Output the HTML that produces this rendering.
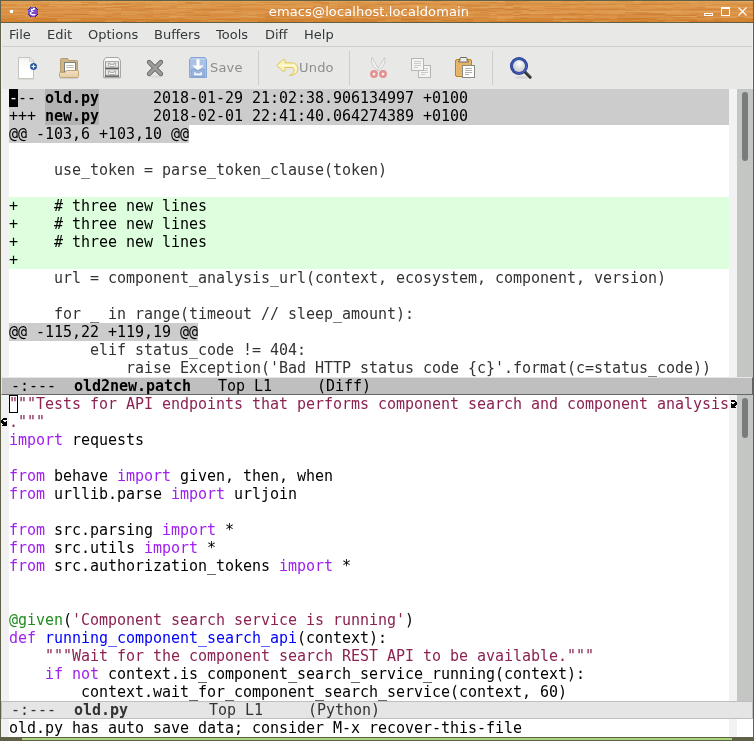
<!DOCTYPE html>
<html lang="en"><head><meta charset="utf-8"><title>emacs@localhost.localdomain</title>
<style>
html,body{margin:0;padding:0}
body{width:754px;height:741px;overflow:hidden;background:#5f6047;position:relative;font-family:"DejaVu Sans","Liberation Sans",sans-serif}
.abs{position:absolute}
#root{position:absolute;left:0;top:0;width:754px;height:741px;will-change:transform}
#title{position:absolute;left:1px;top:1px;width:752px;height:21px;overflow:hidden;background:#d99145}
.wood{position:absolute;left:0;top:0}
#ttext{position:absolute;left:-8px;top:0;width:752px;height:21px;line-height:21px;text-align:center;color:#fff;font-size:13px;letter-spacing:0.12px}
#menubar{position:absolute;left:1px;top:23px;width:752px;height:23px;background:#e8e8e7;border-bottom:1px solid #d0d0ce;font-size:13px;color:#33393b}
#menubar span{position:absolute;top:1px;line-height:22px}
#toolbar{position:absolute;left:1px;top:47px;width:752px;height:42px;background:#e8e8e7}
.sep{position:absolute;top:4px;width:1px;height:34px;background:#cdcdcb}
.tlabel{position:absolute;font-size:13px;letter-spacing:0.2px;color:#8b8e8c;line-height:16px}
#ed{position:absolute;left:1px;top:89px;width:752px;height:648px;background:#fff}
.fringe{position:absolute;top:89px;width:8px;height:648px;background:#f2f2f2}
.sb{position:absolute;left:737px;width:16px;background:#c4c6c4}
.thumb{position:absolute;left:5px;width:6px;border-radius:3px;background:#787c7c}
.row{position:absolute;left:9px;width:720px;height:18px;line-height:18px;white-space:pre;font-family:"DejaVu Sans Mono","Liberation Mono",monospace;font-size:15px;letter-spacing:-0.0308px;color:#000;overflow:visible}
.rh{background:#ccc}
.ra{background:#dfd}
.h{}
.fh{background:#b3b3b3;font-weight:bold}
.hh{background:#ccc;display:inline-block;height:18px}
.c{color:#333}
.s{color:#8b2252}
.k{color:#a020f0}
.f{color:#00f}
.t{color:#228b22}
.ml{position:absolute;left:1px;width:750px;height:16px;line-height:16px;white-space:pre;font-family:"DejaVu Sans Mono","Liberation Mono",monospace;font-size:15px;letter-spacing:-0.0308px;padding-left:0}
.ml1{background:#bfbfbf;color:#000;border:1px solid;border-color:#e6e6e6 #666 #666 #e6e6e6}
.ml2{background:#e5e5e5;color:#333;border:1px solid #bfbfbf}
.ml b{font-weight:bold}
.cur{position:absolute;left:9px;top:89px;width:9px;height:18px;background:#000}
.cur2{position:absolute;left:9px;top:395px;width:7px;height:16px;border:1px solid #000}
</style></head><body><div id="root">
<div id="title"><svg class="wood" width="752" height="21" viewBox="0 0 752 21" shape-rendering="crispEdges"><rect x="0" y="0" width="752" height="1" fill="#e0a055"/><rect x="0" y="1" width="752" height="1" fill="#dc9a4e"/><rect x="0" y="2" width="752" height="1" fill="#db9548"/><rect x="0" y="3" width="752" height="1" fill="#d99145"/><rect x="0" y="4" width="752" height="1" fill="#dc9648"/><rect x="0" y="5" width="752" height="1" fill="#de9a4e"/><rect x="0" y="6" width="752" height="1" fill="#dd964a"/><rect x="0" y="7" width="752" height="1" fill="#d98f42"/><rect x="0" y="8" width="752" height="1" fill="#d68a3e"/><rect x="0" y="9" width="752" height="1" fill="#d98f44"/><rect x="0" y="10" width="752" height="1" fill="#dc954a"/><rect x="0" y="11" width="752" height="1" fill="#dd984c"/><rect x="0" y="12" width="752" height="1" fill="#da9246"/><rect x="0" y="13" width="752" height="1" fill="#d68b3f"/><rect x="0" y="14" width="752" height="1" fill="#d88e42"/><rect x="0" y="15" width="752" height="1" fill="#db9448"/><rect x="0" y="16" width="752" height="1" fill="#d98f43"/><rect x="0" y="17" width="752" height="1" fill="#d58839"/><rect x="0" y="18" width="752" height="1" fill="#d3842f"/><rect x="0" y="19" width="752" height="1" fill="#d58736"/><rect x="0" y="20" width="752" height="1" fill="#d1802c"/><rect x="32" y="0" width="8" height="1" fill="#b8651a" opacity="0.12"/><rect x="40" y="0" width="16" height="1" fill="#f0be7c" opacity="0.14"/><rect x="56" y="0" width="16" height="1" fill="#b8651a" opacity="0.12"/><rect x="128" y="0" width="16" height="1" fill="#f0be7c" opacity="0.14"/><rect x="152" y="0" width="8" height="1" fill="#b8651a" opacity="0.12"/><rect x="160" y="0" width="16" height="1" fill="#f0be7c" opacity="0.2"/><rect x="192" y="0" width="8" height="1" fill="#f0be7c" opacity="0.3"/><rect x="200" y="0" width="24" height="1" fill="#f0be7c" opacity="0.14"/><rect x="240" y="0" width="16" height="1" fill="#f0be7c" opacity="0.14"/><rect x="304" y="0" width="16" height="1" fill="#b8651a" opacity="0.12"/><rect x="328" y="0" width="8" height="1" fill="#f0be7c" opacity="0.2"/><rect x="368" y="0" width="8" height="1" fill="#f0be7c" opacity="0.2"/><rect x="392" y="0" width="16" height="1" fill="#f0be7c" opacity="0.3"/><rect x="432" y="0" width="8" height="1" fill="#b8651a" opacity="0.2"/><rect x="456" y="0" width="16" height="1" fill="#f0be7c" opacity="0.14"/><rect x="480" y="0" width="24" height="1" fill="#f0be7c" opacity="0.3"/><rect x="504" y="0" width="24" height="1" fill="#b8651a" opacity="0.28"/><rect x="560" y="0" width="24" height="1" fill="#b8651a" opacity="0.2"/><rect x="584" y="0" width="8" height="1" fill="#f0be7c" opacity="0.14"/><rect x="592" y="0" width="16" height="1" fill="#f0be7c" opacity="0.2"/><rect x="616" y="0" width="16" height="1" fill="#b8651a" opacity="0.2"/><rect x="632" y="0" width="8" height="1" fill="#f0be7c" opacity="0.2"/><rect x="640" y="0" width="16" height="1" fill="#b8651a" opacity="0.12"/><rect x="704" y="0" width="8" height="1" fill="#f0be7c" opacity="0.14"/><rect x="728" y="0" width="16" height="1" fill="#f0be7c" opacity="0.2"/><rect x="744" y="0" width="8" height="1" fill="#f0be7c" opacity="0.3"/><rect x="56" y="1" width="24" height="1" fill="#f0be7c" opacity="0.3"/><rect x="80" y="1" width="16" height="1" fill="#b8651a" opacity="0.2"/><rect x="96" y="1" width="16" height="1" fill="#f0be7c" opacity="0.3"/><rect x="112" y="1" width="16" height="1" fill="#f0be7c" opacity="0.14"/><rect x="136" y="1" width="8" height="1" fill="#b8651a" opacity="0.12"/><rect x="144" y="1" width="8" height="1" fill="#f0be7c" opacity="0.14"/><rect x="152" y="1" width="16" height="1" fill="#f0be7c" opacity="0.2"/><rect x="168" y="1" width="16" height="1" fill="#f0be7c" opacity="0.14"/><rect x="184" y="1" width="16" height="1" fill="#b8651a" opacity="0.28"/><rect x="208" y="1" width="16" height="1" fill="#b8651a" opacity="0.12"/><rect x="248" y="1" width="8" height="1" fill="#f0be7c" opacity="0.14"/><rect x="256" y="1" width="24" height="1" fill="#b8651a" opacity="0.2"/><rect x="312" y="1" width="16" height="1" fill="#b8651a" opacity="0.28"/><rect x="344" y="1" width="16" height="1" fill="#b8651a" opacity="0.28"/><rect x="376" y="1" width="8" height="1" fill="#b8651a" opacity="0.12"/><rect x="400" y="1" width="16" height="1" fill="#b8651a" opacity="0.12"/><rect x="456" y="1" width="8" height="1" fill="#f0be7c" opacity="0.2"/><rect x="480" y="1" width="16" height="1" fill="#b8651a" opacity="0.28"/><rect x="552" y="1" width="8" height="1" fill="#f0be7c" opacity="0.14"/><rect x="568" y="1" width="8" height="1" fill="#f0be7c" opacity="0.3"/><rect x="688" y="1" width="8" height="1" fill="#f0be7c" opacity="0.3"/><rect x="736" y="1" width="24" height="1" fill="#f0be7c" opacity="0.14"/><rect x="0" y="2" width="8" height="1" fill="#f0be7c" opacity="0.2"/><rect x="8" y="2" width="24" height="1" fill="#f0be7c" opacity="0.3"/><rect x="48" y="2" width="8" height="1" fill="#f0be7c" opacity="0.3"/><rect x="56" y="2" width="8" height="1" fill="#f0be7c" opacity="0.3"/><rect x="64" y="2" width="24" height="1" fill="#f0be7c" opacity="0.3"/><rect x="88" y="2" width="8" height="1" fill="#b8651a" opacity="0.12"/><rect x="96" y="2" width="8" height="1" fill="#f0be7c" opacity="0.14"/><rect x="112" y="2" width="16" height="1" fill="#b8651a" opacity="0.28"/><rect x="184" y="2" width="16" height="1" fill="#b8651a" opacity="0.28"/><rect x="240" y="2" width="16" height="1" fill="#f0be7c" opacity="0.14"/><rect x="256" y="2" width="8" height="1" fill="#f0be7c" opacity="0.3"/><rect x="264" y="2" width="24" height="1" fill="#f0be7c" opacity="0.14"/><rect x="320" y="2" width="8" height="1" fill="#b8651a" opacity="0.2"/><rect x="400" y="2" width="24" height="1" fill="#b8651a" opacity="0.28"/><rect x="496" y="2" width="8" height="1" fill="#b8651a" opacity="0.2"/><rect x="504" y="2" width="16" height="1" fill="#b8651a" opacity="0.28"/><rect x="520" y="2" width="8" height="1" fill="#b8651a" opacity="0.12"/><rect x="528" y="2" width="24" height="1" fill="#b8651a" opacity="0.12"/><rect x="584" y="2" width="8" height="1" fill="#b8651a" opacity="0.12"/><rect x="592" y="2" width="16" height="1" fill="#f0be7c" opacity="0.14"/><rect x="632" y="2" width="8" height="1" fill="#f0be7c" opacity="0.2"/><rect x="640" y="2" width="16" height="1" fill="#b8651a" opacity="0.2"/><rect x="656" y="2" width="8" height="1" fill="#b8651a" opacity="0.12"/><rect x="664" y="2" width="24" height="1" fill="#b8651a" opacity="0.2"/><rect x="704" y="2" width="24" height="1" fill="#f0be7c" opacity="0.2"/><rect x="16" y="3" width="8" height="1" fill="#f0be7c" opacity="0.2"/><rect x="32" y="3" width="8" height="1" fill="#b8651a" opacity="0.12"/><rect x="80" y="3" width="8" height="1" fill="#b8651a" opacity="0.28"/><rect x="104" y="3" width="24" height="1" fill="#b8651a" opacity="0.2"/><rect x="136" y="3" width="8" height="1" fill="#b8651a" opacity="0.12"/><rect x="152" y="3" width="24" height="1" fill="#f0be7c" opacity="0.2"/><rect x="184" y="3" width="8" height="1" fill="#f0be7c" opacity="0.14"/><rect x="192" y="3" width="16" height="1" fill="#f0be7c" opacity="0.3"/><rect x="248" y="3" width="8" height="1" fill="#b8651a" opacity="0.12"/><rect x="264" y="3" width="24" height="1" fill="#b8651a" opacity="0.12"/><rect x="296" y="3" width="24" height="1" fill="#f0be7c" opacity="0.2"/><rect x="328" y="3" width="8" height="1" fill="#f0be7c" opacity="0.3"/><rect x="376" y="3" width="24" height="1" fill="#b8651a" opacity="0.2"/><rect x="440" y="3" width="8" height="1" fill="#b8651a" opacity="0.28"/><rect x="496" y="3" width="8" height="1" fill="#f0be7c" opacity="0.3"/><rect x="504" y="3" width="8" height="1" fill="#b8651a" opacity="0.12"/><rect x="560" y="3" width="16" height="1" fill="#b8651a" opacity="0.2"/><rect x="584" y="3" width="8" height="1" fill="#b8651a" opacity="0.12"/><rect x="592" y="3" width="8" height="1" fill="#b8651a" opacity="0.2"/><rect x="600" y="3" width="16" height="1" fill="#b8651a" opacity="0.12"/><rect x="616" y="3" width="8" height="1" fill="#f0be7c" opacity="0.14"/><rect x="624" y="3" width="8" height="1" fill="#b8651a" opacity="0.12"/><rect x="632" y="3" width="16" height="1" fill="#b8651a" opacity="0.28"/><rect x="648" y="3" width="8" height="1" fill="#b8651a" opacity="0.12"/><rect x="656" y="3" width="8" height="1" fill="#b8651a" opacity="0.12"/><rect x="664" y="3" width="8" height="1" fill="#b8651a" opacity="0.12"/><rect x="672" y="3" width="16" height="1" fill="#f0be7c" opacity="0.2"/><rect x="688" y="3" width="24" height="1" fill="#f0be7c" opacity="0.3"/><rect x="0" y="4" width="16" height="1" fill="#b8651a" opacity="0.2"/><rect x="40" y="4" width="8" height="1" fill="#b8651a" opacity="0.28"/><rect x="48" y="4" width="24" height="1" fill="#f0be7c" opacity="0.3"/><rect x="112" y="4" width="16" height="1" fill="#f0be7c" opacity="0.3"/><rect x="216" y="4" width="8" height="1" fill="#f0be7c" opacity="0.14"/><rect x="224" y="4" width="24" height="1" fill="#b8651a" opacity="0.12"/><rect x="264" y="4" width="16" height="1" fill="#f0be7c" opacity="0.14"/><rect x="360" y="4" width="16" height="1" fill="#b8651a" opacity="0.12"/><rect x="376" y="4" width="8" height="1" fill="#f0be7c" opacity="0.14"/><rect x="408" y="4" width="16" height="1" fill="#f0be7c" opacity="0.3"/><rect x="448" y="4" width="8" height="1" fill="#f0be7c" opacity="0.14"/><rect x="456" y="4" width="8" height="1" fill="#b8651a" opacity="0.28"/><rect x="464" y="4" width="24" height="1" fill="#b8651a" opacity="0.28"/><rect x="488" y="4" width="8" height="1" fill="#f0be7c" opacity="0.14"/><rect x="496" y="4" width="16" height="1" fill="#b8651a" opacity="0.28"/><rect x="592" y="4" width="16" height="1" fill="#f0be7c" opacity="0.14"/><rect x="608" y="4" width="16" height="1" fill="#f0be7c" opacity="0.2"/><rect x="648" y="4" width="16" height="1" fill="#f0be7c" opacity="0.14"/><rect x="736" y="4" width="16" height="1" fill="#b8651a" opacity="0.12"/><rect x="40" y="5" width="16" height="1" fill="#b8651a" opacity="0.2"/><rect x="64" y="5" width="8" height="1" fill="#b8651a" opacity="0.2"/><rect x="72" y="5" width="16" height="1" fill="#f0be7c" opacity="0.14"/><rect x="88" y="5" width="24" height="1" fill="#f0be7c" opacity="0.3"/><rect x="112" y="5" width="8" height="1" fill="#b8651a" opacity="0.12"/><rect x="120" y="5" width="16" height="1" fill="#b8651a" opacity="0.28"/><rect x="136" y="5" width="8" height="1" fill="#b8651a" opacity="0.2"/><rect x="152" y="5" width="8" height="1" fill="#f0be7c" opacity="0.3"/><rect x="168" y="5" width="8" height="1" fill="#b8651a" opacity="0.2"/><rect x="216" y="5" width="24" height="1" fill="#b8651a" opacity="0.28"/><rect x="240" y="5" width="16" height="1" fill="#f0be7c" opacity="0.14"/><rect x="296" y="5" width="16" height="1" fill="#f0be7c" opacity="0.2"/><rect x="312" y="5" width="16" height="1" fill="#b8651a" opacity="0.2"/><rect x="336" y="5" width="24" height="1" fill="#b8651a" opacity="0.28"/><rect x="360" y="5" width="8" height="1" fill="#b8651a" opacity="0.28"/><rect x="368" y="5" width="24" height="1" fill="#b8651a" opacity="0.12"/><rect x="392" y="5" width="24" height="1" fill="#f0be7c" opacity="0.14"/><rect x="464" y="5" width="16" height="1" fill="#b8651a" opacity="0.28"/><rect x="480" y="5" width="8" height="1" fill="#b8651a" opacity="0.12"/><rect x="496" y="5" width="8" height="1" fill="#f0be7c" opacity="0.2"/><rect x="504" y="5" width="16" height="1" fill="#f0be7c" opacity="0.14"/><rect x="544" y="5" width="16" height="1" fill="#b8651a" opacity="0.28"/><rect x="560" y="5" width="8" height="1" fill="#b8651a" opacity="0.2"/><rect x="616" y="5" width="8" height="1" fill="#f0be7c" opacity="0.14"/><rect x="624" y="5" width="16" height="1" fill="#b8651a" opacity="0.2"/><rect x="656" y="5" width="8" height="1" fill="#f0be7c" opacity="0.2"/><rect x="704" y="5" width="16" height="1" fill="#f0be7c" opacity="0.2"/><rect x="736" y="5" width="16" height="1" fill="#b8651a" opacity="0.12"/><rect x="0" y="6" width="8" height="1" fill="#f0be7c" opacity="0.3"/><rect x="8" y="6" width="24" height="1" fill="#f0be7c" opacity="0.3"/><rect x="56" y="6" width="16" height="1" fill="#f0be7c" opacity="0.14"/><rect x="104" y="6" width="24" height="1" fill="#b8651a" opacity="0.28"/><rect x="144" y="6" width="8" height="1" fill="#f0be7c" opacity="0.2"/><rect x="168" y="6" width="8" height="1" fill="#b8651a" opacity="0.12"/><rect x="176" y="6" width="16" height="1" fill="#f0be7c" opacity="0.3"/><rect x="280" y="6" width="8" height="1" fill="#f0be7c" opacity="0.2"/><rect x="312" y="6" width="8" height="1" fill="#b8651a" opacity="0.28"/><rect x="344" y="6" width="24" height="1" fill="#b8651a" opacity="0.2"/><rect x="376" y="6" width="8" height="1" fill="#f0be7c" opacity="0.2"/><rect x="408" y="6" width="8" height="1" fill="#f0be7c" opacity="0.14"/><rect x="424" y="6" width="8" height="1" fill="#f0be7c" opacity="0.14"/><rect x="440" y="6" width="8" height="1" fill="#f0be7c" opacity="0.3"/><rect x="472" y="6" width="24" height="1" fill="#f0be7c" opacity="0.3"/><rect x="504" y="6" width="8" height="1" fill="#f0be7c" opacity="0.3"/><rect x="512" y="6" width="8" height="1" fill="#b8651a" opacity="0.28"/><rect x="520" y="6" width="8" height="1" fill="#f0be7c" opacity="0.2"/><rect x="552" y="6" width="24" height="1" fill="#f0be7c" opacity="0.14"/><rect x="576" y="6" width="8" height="1" fill="#b8651a" opacity="0.12"/><rect x="664" y="6" width="8" height="1" fill="#f0be7c" opacity="0.2"/><rect x="672" y="6" width="8" height="1" fill="#b8651a" opacity="0.12"/><rect x="696" y="6" width="8" height="1" fill="#b8651a" opacity="0.2"/><rect x="704" y="6" width="16" height="1" fill="#f0be7c" opacity="0.3"/><rect x="720" y="6" width="16" height="1" fill="#f0be7c" opacity="0.3"/><rect x="736" y="6" width="16" height="1" fill="#f0be7c" opacity="0.2"/><rect x="40" y="7" width="16" height="1" fill="#f0be7c" opacity="0.14"/><rect x="56" y="7" width="16" height="1" fill="#f0be7c" opacity="0.14"/><rect x="72" y="7" width="8" height="1" fill="#f0be7c" opacity="0.14"/><rect x="80" y="7" width="16" height="1" fill="#b8651a" opacity="0.2"/><rect x="104" y="7" width="16" height="1" fill="#f0be7c" opacity="0.3"/><rect x="144" y="7" width="8" height="1" fill="#b8651a" opacity="0.28"/><rect x="192" y="7" width="8" height="1" fill="#f0be7c" opacity="0.14"/><rect x="264" y="7" width="8" height="1" fill="#f0be7c" opacity="0.3"/><rect x="296" y="7" width="16" height="1" fill="#b8651a" opacity="0.28"/><rect x="336" y="7" width="8" height="1" fill="#b8651a" opacity="0.28"/><rect x="352" y="7" width="16" height="1" fill="#b8651a" opacity="0.2"/><rect x="384" y="7" width="8" height="1" fill="#f0be7c" opacity="0.2"/><rect x="416" y="7" width="8" height="1" fill="#f0be7c" opacity="0.2"/><rect x="440" y="7" width="24" height="1" fill="#f0be7c" opacity="0.3"/><rect x="488" y="7" width="8" height="1" fill="#b8651a" opacity="0.28"/><rect x="496" y="7" width="8" height="1" fill="#b8651a" opacity="0.28"/><rect x="504" y="7" width="8" height="1" fill="#f0be7c" opacity="0.14"/><rect x="512" y="7" width="8" height="1" fill="#b8651a" opacity="0.12"/><rect x="528" y="7" width="16" height="1" fill="#f0be7c" opacity="0.14"/><rect x="544" y="7" width="16" height="1" fill="#b8651a" opacity="0.12"/><rect x="624" y="7" width="8" height="1" fill="#f0be7c" opacity="0.2"/><rect x="640" y="7" width="8" height="1" fill="#f0be7c" opacity="0.2"/><rect x="648" y="7" width="8" height="1" fill="#f0be7c" opacity="0.14"/><rect x="672" y="7" width="16" height="1" fill="#f0be7c" opacity="0.14"/><rect x="0" y="8" width="8" height="1" fill="#f0be7c" opacity="0.2"/><rect x="8" y="8" width="8" height="1" fill="#f0be7c" opacity="0.2"/><rect x="80" y="8" width="8" height="1" fill="#f0be7c" opacity="0.2"/><rect x="104" y="8" width="16" height="1" fill="#f0be7c" opacity="0.2"/><rect x="168" y="8" width="24" height="1" fill="#f0be7c" opacity="0.3"/><rect x="192" y="8" width="8" height="1" fill="#b8651a" opacity="0.2"/><rect x="200" y="8" width="24" height="1" fill="#b8651a" opacity="0.12"/><rect x="232" y="8" width="8" height="1" fill="#b8651a" opacity="0.12"/><rect x="288" y="8" width="16" height="1" fill="#f0be7c" opacity="0.14"/><rect x="328" y="8" width="8" height="1" fill="#f0be7c" opacity="0.14"/><rect x="336" y="8" width="16" height="1" fill="#f0be7c" opacity="0.2"/><rect x="368" y="8" width="8" height="1" fill="#f0be7c" opacity="0.2"/><rect x="384" y="8" width="8" height="1" fill="#f0be7c" opacity="0.2"/><rect x="392" y="8" width="8" height="1" fill="#b8651a" opacity="0.12"/><rect x="400" y="8" width="16" height="1" fill="#b8651a" opacity="0.28"/><rect x="416" y="8" width="24" height="1" fill="#b8651a" opacity="0.28"/><rect x="488" y="8" width="16" height="1" fill="#f0be7c" opacity="0.14"/><rect x="504" y="8" width="8" height="1" fill="#b8651a" opacity="0.28"/><rect x="512" y="8" width="8" height="1" fill="#b8651a" opacity="0.12"/><rect x="520" y="8" width="8" height="1" fill="#b8651a" opacity="0.28"/><rect x="528" y="8" width="8" height="1" fill="#f0be7c" opacity="0.3"/><rect x="536" y="8" width="24" height="1" fill="#f0be7c" opacity="0.2"/><rect x="560" y="8" width="8" height="1" fill="#b8651a" opacity="0.2"/><rect x="600" y="8" width="16" height="1" fill="#b8651a" opacity="0.2"/><rect x="632" y="8" width="8" height="1" fill="#f0be7c" opacity="0.3"/><rect x="688" y="8" width="16" height="1" fill="#b8651a" opacity="0.12"/><rect x="704" y="8" width="8" height="1" fill="#b8651a" opacity="0.2"/><rect x="736" y="8" width="8" height="1" fill="#f0be7c" opacity="0.14"/><rect x="8" y="9" width="16" height="1" fill="#f0be7c" opacity="0.3"/><rect x="40" y="9" width="8" height="1" fill="#f0be7c" opacity="0.14"/><rect x="64" y="9" width="8" height="1" fill="#f0be7c" opacity="0.2"/><rect x="136" y="9" width="8" height="1" fill="#b8651a" opacity="0.28"/><rect x="152" y="9" width="16" height="1" fill="#f0be7c" opacity="0.3"/><rect x="168" y="9" width="16" height="1" fill="#f0be7c" opacity="0.2"/><rect x="200" y="9" width="8" height="1" fill="#b8651a" opacity="0.12"/><rect x="208" y="9" width="8" height="1" fill="#b8651a" opacity="0.28"/><rect x="224" y="9" width="16" height="1" fill="#f0be7c" opacity="0.2"/><rect x="296" y="9" width="8" height="1" fill="#b8651a" opacity="0.28"/><rect x="352" y="9" width="8" height="1" fill="#b8651a" opacity="0.2"/><rect x="360" y="9" width="16" height="1" fill="#f0be7c" opacity="0.2"/><rect x="392" y="9" width="8" height="1" fill="#b8651a" opacity="0.28"/><rect x="400" y="9" width="8" height="1" fill="#b8651a" opacity="0.28"/><rect x="432" y="9" width="24" height="1" fill="#f0be7c" opacity="0.14"/><rect x="456" y="9" width="8" height="1" fill="#f0be7c" opacity="0.3"/><rect x="464" y="9" width="24" height="1" fill="#b8651a" opacity="0.28"/><rect x="520" y="9" width="8" height="1" fill="#f0be7c" opacity="0.3"/><rect x="528" y="9" width="8" height="1" fill="#b8651a" opacity="0.28"/><rect x="560" y="9" width="16" height="1" fill="#f0be7c" opacity="0.2"/><rect x="592" y="9" width="8" height="1" fill="#f0be7c" opacity="0.14"/><rect x="600" y="9" width="24" height="1" fill="#f0be7c" opacity="0.14"/><rect x="672" y="9" width="8" height="1" fill="#f0be7c" opacity="0.3"/><rect x="720" y="9" width="8" height="1" fill="#f0be7c" opacity="0.14"/><rect x="728" y="9" width="8" height="1" fill="#f0be7c" opacity="0.14"/><rect x="736" y="9" width="16" height="1" fill="#f0be7c" opacity="0.14"/><rect x="8" y="10" width="8" height="1" fill="#f0be7c" opacity="0.3"/><rect x="40" y="10" width="8" height="1" fill="#b8651a" opacity="0.28"/><rect x="88" y="10" width="16" height="1" fill="#f0be7c" opacity="0.2"/><rect x="104" y="10" width="8" height="1" fill="#b8651a" opacity="0.12"/><rect x="208" y="10" width="16" height="1" fill="#f0be7c" opacity="0.14"/><rect x="224" y="10" width="8" height="1" fill="#f0be7c" opacity="0.14"/><rect x="232" y="10" width="8" height="1" fill="#b8651a" opacity="0.28"/><rect x="280" y="10" width="24" height="1" fill="#b8651a" opacity="0.28"/><rect x="304" y="10" width="8" height="1" fill="#b8651a" opacity="0.12"/><rect x="320" y="10" width="8" height="1" fill="#f0be7c" opacity="0.14"/><rect x="328" y="10" width="24" height="1" fill="#f0be7c" opacity="0.14"/><rect x="488" y="10" width="8" height="1" fill="#b8651a" opacity="0.28"/><rect x="536" y="10" width="8" height="1" fill="#f0be7c" opacity="0.14"/><rect x="544" y="10" width="8" height="1" fill="#f0be7c" opacity="0.14"/><rect x="560" y="10" width="24" height="1" fill="#f0be7c" opacity="0.14"/><rect x="592" y="10" width="24" height="1" fill="#f0be7c" opacity="0.14"/><rect x="616" y="10" width="24" height="1" fill="#f0be7c" opacity="0.3"/><rect x="640" y="10" width="8" height="1" fill="#f0be7c" opacity="0.3"/><rect x="648" y="10" width="24" height="1" fill="#f0be7c" opacity="0.3"/><rect x="672" y="10" width="16" height="1" fill="#f0be7c" opacity="0.14"/><rect x="688" y="10" width="8" height="1" fill="#f0be7c" opacity="0.14"/><rect x="696" y="10" width="24" height="1" fill="#f0be7c" opacity="0.3"/><rect x="720" y="10" width="24" height="1" fill="#b8651a" opacity="0.12"/><rect x="744" y="10" width="8" height="1" fill="#f0be7c" opacity="0.3"/><rect x="0" y="11" width="8" height="1" fill="#b8651a" opacity="0.2"/><rect x="8" y="11" width="16" height="1" fill="#b8651a" opacity="0.2"/><rect x="80" y="11" width="8" height="1" fill="#b8651a" opacity="0.12"/><rect x="120" y="11" width="8" height="1" fill="#f0be7c" opacity="0.14"/><rect x="128" y="11" width="16" height="1" fill="#f0be7c" opacity="0.14"/><rect x="144" y="11" width="8" height="1" fill="#b8651a" opacity="0.12"/><rect x="176" y="11" width="16" height="1" fill="#b8651a" opacity="0.28"/><rect x="200" y="11" width="8" height="1" fill="#b8651a" opacity="0.12"/><rect x="208" y="11" width="24" height="1" fill="#f0be7c" opacity="0.14"/><rect x="280" y="11" width="8" height="1" fill="#f0be7c" opacity="0.2"/><rect x="288" y="11" width="24" height="1" fill="#f0be7c" opacity="0.3"/><rect x="312" y="11" width="8" height="1" fill="#b8651a" opacity="0.2"/><rect x="320" y="11" width="8" height="1" fill="#b8651a" opacity="0.28"/><rect x="328" y="11" width="16" height="1" fill="#f0be7c" opacity="0.3"/><rect x="384" y="11" width="24" height="1" fill="#f0be7c" opacity="0.3"/><rect x="432" y="11" width="24" height="1" fill="#b8651a" opacity="0.2"/><rect x="480" y="11" width="8" height="1" fill="#b8651a" opacity="0.28"/><rect x="488" y="11" width="24" height="1" fill="#f0be7c" opacity="0.14"/><rect x="512" y="11" width="8" height="1" fill="#b8651a" opacity="0.28"/><rect x="520" y="11" width="16" height="1" fill="#f0be7c" opacity="0.14"/><rect x="560" y="11" width="8" height="1" fill="#f0be7c" opacity="0.14"/><rect x="608" y="11" width="8" height="1" fill="#f0be7c" opacity="0.14"/><rect x="624" y="11" width="24" height="1" fill="#b8651a" opacity="0.2"/><rect x="648" y="11" width="8" height="1" fill="#f0be7c" opacity="0.14"/><rect x="656" y="11" width="8" height="1" fill="#f0be7c" opacity="0.2"/><rect x="664" y="11" width="16" height="1" fill="#f0be7c" opacity="0.2"/><rect x="720" y="11" width="8" height="1" fill="#b8651a" opacity="0.28"/><rect x="728" y="11" width="16" height="1" fill="#f0be7c" opacity="0.14"/><rect x="88" y="12" width="24" height="1" fill="#f0be7c" opacity="0.2"/><rect x="112" y="12" width="8" height="1" fill="#b8651a" opacity="0.28"/><rect x="160" y="12" width="8" height="1" fill="#b8651a" opacity="0.2"/><rect x="248" y="12" width="8" height="1" fill="#f0be7c" opacity="0.3"/><rect x="256" y="12" width="8" height="1" fill="#f0be7c" opacity="0.14"/><rect x="264" y="12" width="16" height="1" fill="#b8651a" opacity="0.28"/><rect x="352" y="12" width="16" height="1" fill="#f0be7c" opacity="0.3"/><rect x="368" y="12" width="8" height="1" fill="#b8651a" opacity="0.12"/><rect x="408" y="12" width="8" height="1" fill="#b8651a" opacity="0.2"/><rect x="416" y="12" width="8" height="1" fill="#f0be7c" opacity="0.2"/><rect x="440" y="12" width="24" height="1" fill="#b8651a" opacity="0.2"/><rect x="464" y="12" width="8" height="1" fill="#f0be7c" opacity="0.3"/><rect x="520" y="12" width="8" height="1" fill="#f0be7c" opacity="0.14"/><rect x="528" y="12" width="24" height="1" fill="#f0be7c" opacity="0.3"/><rect x="568" y="12" width="8" height="1" fill="#b8651a" opacity="0.28"/><rect x="600" y="12" width="24" height="1" fill="#f0be7c" opacity="0.2"/><rect x="632" y="12" width="8" height="1" fill="#b8651a" opacity="0.2"/><rect x="640" y="12" width="24" height="1" fill="#b8651a" opacity="0.2"/><rect x="664" y="12" width="24" height="1" fill="#f0be7c" opacity="0.14"/><rect x="712" y="12" width="8" height="1" fill="#b8651a" opacity="0.2"/><rect x="0" y="13" width="8" height="1" fill="#f0be7c" opacity="0.2"/><rect x="8" y="13" width="16" height="1" fill="#f0be7c" opacity="0.3"/><rect x="64" y="13" width="24" height="1" fill="#b8651a" opacity="0.28"/><rect x="96" y="13" width="8" height="1" fill="#f0be7c" opacity="0.2"/><rect x="120" y="13" width="16" height="1" fill="#f0be7c" opacity="0.3"/><rect x="176" y="13" width="8" height="1" fill="#f0be7c" opacity="0.3"/><rect x="240" y="13" width="16" height="1" fill="#f0be7c" opacity="0.2"/><rect x="320" y="13" width="24" height="1" fill="#f0be7c" opacity="0.2"/><rect x="376" y="13" width="16" height="1" fill="#b8651a" opacity="0.2"/><rect x="392" y="13" width="24" height="1" fill="#f0be7c" opacity="0.3"/><rect x="424" y="13" width="8" height="1" fill="#f0be7c" opacity="0.14"/><rect x="488" y="13" width="8" height="1" fill="#f0be7c" opacity="0.3"/><rect x="512" y="13" width="8" height="1" fill="#f0be7c" opacity="0.3"/><rect x="520" y="13" width="8" height="1" fill="#b8651a" opacity="0.28"/><rect x="544" y="13" width="8" height="1" fill="#b8651a" opacity="0.2"/><rect x="552" y="13" width="16" height="1" fill="#b8651a" opacity="0.12"/><rect x="568" y="13" width="8" height="1" fill="#b8651a" opacity="0.2"/><rect x="576" y="13" width="16" height="1" fill="#b8651a" opacity="0.2"/><rect x="592" y="13" width="16" height="1" fill="#b8651a" opacity="0.12"/><rect x="632" y="13" width="8" height="1" fill="#b8651a" opacity="0.2"/><rect x="640" y="13" width="24" height="1" fill="#b8651a" opacity="0.28"/><rect x="664" y="13" width="24" height="1" fill="#f0be7c" opacity="0.14"/><rect x="720" y="13" width="8" height="1" fill="#b8651a" opacity="0.12"/><rect x="728" y="13" width="8" height="1" fill="#f0be7c" opacity="0.2"/><rect x="24" y="14" width="16" height="1" fill="#f0be7c" opacity="0.3"/><rect x="64" y="14" width="24" height="1" fill="#f0be7c" opacity="0.14"/><rect x="144" y="14" width="8" height="1" fill="#b8651a" opacity="0.12"/><rect x="152" y="14" width="24" height="1" fill="#f0be7c" opacity="0.14"/><rect x="192" y="14" width="8" height="1" fill="#b8651a" opacity="0.2"/><rect x="200" y="14" width="8" height="1" fill="#b8651a" opacity="0.28"/><rect x="232" y="14" width="16" height="1" fill="#f0be7c" opacity="0.14"/><rect x="344" y="14" width="16" height="1" fill="#f0be7c" opacity="0.3"/><rect x="360" y="14" width="16" height="1" fill="#f0be7c" opacity="0.14"/><rect x="376" y="14" width="24" height="1" fill="#f0be7c" opacity="0.14"/><rect x="416" y="14" width="8" height="1" fill="#f0be7c" opacity="0.14"/><rect x="448" y="14" width="24" height="1" fill="#f0be7c" opacity="0.14"/><rect x="512" y="14" width="8" height="1" fill="#b8651a" opacity="0.28"/><rect x="584" y="14" width="8" height="1" fill="#f0be7c" opacity="0.3"/><rect x="616" y="14" width="8" height="1" fill="#b8651a" opacity="0.2"/><rect x="664" y="14" width="8" height="1" fill="#b8651a" opacity="0.28"/><rect x="672" y="14" width="24" height="1" fill="#b8651a" opacity="0.28"/><rect x="696" y="14" width="8" height="1" fill="#f0be7c" opacity="0.14"/><rect x="0" y="15" width="16" height="1" fill="#b8651a" opacity="0.2"/><rect x="48" y="15" width="16" height="1" fill="#b8651a" opacity="0.28"/><rect x="104" y="15" width="8" height="1" fill="#b8651a" opacity="0.28"/><rect x="144" y="15" width="8" height="1" fill="#b8651a" opacity="0.2"/><rect x="160" y="15" width="8" height="1" fill="#b8651a" opacity="0.12"/><rect x="168" y="15" width="16" height="1" fill="#f0be7c" opacity="0.3"/><rect x="208" y="15" width="16" height="1" fill="#b8651a" opacity="0.12"/><rect x="240" y="15" width="16" height="1" fill="#f0be7c" opacity="0.3"/><rect x="256" y="15" width="8" height="1" fill="#b8651a" opacity="0.12"/><rect x="264" y="15" width="24" height="1" fill="#b8651a" opacity="0.28"/><rect x="344" y="15" width="8" height="1" fill="#b8651a" opacity="0.28"/><rect x="360" y="15" width="16" height="1" fill="#b8651a" opacity="0.28"/><rect x="376" y="15" width="16" height="1" fill="#f0be7c" opacity="0.14"/><rect x="392" y="15" width="8" height="1" fill="#f0be7c" opacity="0.3"/><rect x="400" y="15" width="8" height="1" fill="#b8651a" opacity="0.28"/><rect x="408" y="15" width="8" height="1" fill="#b8651a" opacity="0.28"/><rect x="416" y="15" width="8" height="1" fill="#b8651a" opacity="0.2"/><rect x="440" y="15" width="8" height="1" fill="#f0be7c" opacity="0.3"/><rect x="448" y="15" width="8" height="1" fill="#b8651a" opacity="0.28"/><rect x="456" y="15" width="16" height="1" fill="#f0be7c" opacity="0.14"/><rect x="496" y="15" width="16" height="1" fill="#f0be7c" opacity="0.2"/><rect x="512" y="15" width="16" height="1" fill="#f0be7c" opacity="0.2"/><rect x="544" y="15" width="8" height="1" fill="#b8651a" opacity="0.12"/><rect x="552" y="15" width="8" height="1" fill="#f0be7c" opacity="0.14"/><rect x="560" y="15" width="16" height="1" fill="#f0be7c" opacity="0.14"/><rect x="616" y="15" width="24" height="1" fill="#b8651a" opacity="0.12"/><rect x="664" y="15" width="8" height="1" fill="#b8651a" opacity="0.12"/><rect x="672" y="15" width="24" height="1" fill="#f0be7c" opacity="0.3"/><rect x="696" y="15" width="16" height="1" fill="#b8651a" opacity="0.2"/><rect x="712" y="15" width="8" height="1" fill="#b8651a" opacity="0.12"/><rect x="720" y="15" width="24" height="1" fill="#f0be7c" opacity="0.14"/><rect x="16" y="16" width="8" height="1" fill="#b8651a" opacity="0.28"/><rect x="48" y="16" width="16" height="1" fill="#f0be7c" opacity="0.14"/><rect x="112" y="16" width="8" height="1" fill="#b8651a" opacity="0.12"/><rect x="168" y="16" width="8" height="1" fill="#f0be7c" opacity="0.3"/><rect x="216" y="16" width="24" height="1" fill="#f0be7c" opacity="0.2"/><rect x="248" y="16" width="16" height="1" fill="#f0be7c" opacity="0.2"/><rect x="264" y="16" width="8" height="1" fill="#b8651a" opacity="0.28"/><rect x="272" y="16" width="8" height="1" fill="#f0be7c" opacity="0.2"/><rect x="312" y="16" width="8" height="1" fill="#b8651a" opacity="0.12"/><rect x="320" y="16" width="8" height="1" fill="#f0be7c" opacity="0.3"/><rect x="328" y="16" width="8" height="1" fill="#b8651a" opacity="0.12"/><rect x="352" y="16" width="16" height="1" fill="#f0be7c" opacity="0.3"/><rect x="416" y="16" width="8" height="1" fill="#f0be7c" opacity="0.14"/><rect x="424" y="16" width="8" height="1" fill="#b8651a" opacity="0.2"/><rect x="440" y="16" width="8" height="1" fill="#b8651a" opacity="0.2"/><rect x="448" y="16" width="8" height="1" fill="#f0be7c" opacity="0.3"/><rect x="456" y="16" width="8" height="1" fill="#f0be7c" opacity="0.3"/><rect x="472" y="16" width="16" height="1" fill="#b8651a" opacity="0.12"/><rect x="488" y="16" width="16" height="1" fill="#f0be7c" opacity="0.3"/><rect x="504" y="16" width="8" height="1" fill="#f0be7c" opacity="0.2"/><rect x="520" y="16" width="8" height="1" fill="#b8651a" opacity="0.12"/><rect x="552" y="16" width="24" height="1" fill="#f0be7c" opacity="0.3"/><rect x="600" y="16" width="8" height="1" fill="#f0be7c" opacity="0.14"/><rect x="648" y="16" width="16" height="1" fill="#b8651a" opacity="0.12"/><rect x="672" y="16" width="16" height="1" fill="#b8651a" opacity="0.28"/><rect x="696" y="16" width="8" height="1" fill="#b8651a" opacity="0.28"/><rect x="704" y="16" width="16" height="1" fill="#f0be7c" opacity="0.2"/><rect x="720" y="16" width="16" height="1" fill="#f0be7c" opacity="0.3"/><rect x="736" y="16" width="8" height="1" fill="#b8651a" opacity="0.28"/><rect x="744" y="16" width="8" height="1" fill="#f0be7c" opacity="0.3"/><rect x="8" y="17" width="8" height="1" fill="#b8651a" opacity="0.2"/><rect x="16" y="17" width="16" height="1" fill="#f0be7c" opacity="0.2"/><rect x="32" y="17" width="24" height="1" fill="#b8651a" opacity="0.2"/><rect x="96" y="17" width="8" height="1" fill="#b8651a" opacity="0.12"/><rect x="128" y="17" width="16" height="1" fill="#f0be7c" opacity="0.3"/><rect x="144" y="17" width="8" height="1" fill="#f0be7c" opacity="0.14"/><rect x="160" y="17" width="8" height="1" fill="#f0be7c" opacity="0.2"/><rect x="184" y="17" width="8" height="1" fill="#f0be7c" opacity="0.3"/><rect x="192" y="17" width="24" height="1" fill="#f0be7c" opacity="0.14"/><rect x="280" y="17" width="24" height="1" fill="#f0be7c" opacity="0.2"/><rect x="328" y="17" width="8" height="1" fill="#f0be7c" opacity="0.14"/><rect x="368" y="17" width="8" height="1" fill="#f0be7c" opacity="0.3"/><rect x="440" y="17" width="16" height="1" fill="#f0be7c" opacity="0.14"/><rect x="456" y="17" width="8" height="1" fill="#b8651a" opacity="0.12"/><rect x="496" y="17" width="16" height="1" fill="#f0be7c" opacity="0.3"/><rect x="520" y="17" width="8" height="1" fill="#b8651a" opacity="0.2"/><rect x="552" y="17" width="8" height="1" fill="#f0be7c" opacity="0.14"/><rect x="560" y="17" width="8" height="1" fill="#b8651a" opacity="0.12"/><rect x="584" y="17" width="8" height="1" fill="#f0be7c" opacity="0.2"/><rect x="608" y="17" width="8" height="1" fill="#f0be7c" opacity="0.3"/><rect x="616" y="17" width="16" height="1" fill="#b8651a" opacity="0.28"/><rect x="632" y="17" width="16" height="1" fill="#b8651a" opacity="0.28"/><rect x="656" y="17" width="8" height="1" fill="#f0be7c" opacity="0.14"/><rect x="664" y="17" width="16" height="1" fill="#f0be7c" opacity="0.14"/><rect x="680" y="17" width="8" height="1" fill="#f0be7c" opacity="0.2"/><rect x="688" y="17" width="24" height="1" fill="#f0be7c" opacity="0.14"/><rect x="16" y="18" width="16" height="1" fill="#f0be7c" opacity="0.14"/><rect x="40" y="18" width="16" height="1" fill="#b8651a" opacity="0.12"/><rect x="56" y="18" width="24" height="1" fill="#f0be7c" opacity="0.3"/><rect x="128" y="18" width="16" height="1" fill="#b8651a" opacity="0.2"/><rect x="160" y="18" width="8" height="1" fill="#b8651a" opacity="0.12"/><rect x="192" y="18" width="16" height="1" fill="#f0be7c" opacity="0.2"/><rect x="216" y="18" width="8" height="1" fill="#b8651a" opacity="0.2"/><rect x="224" y="18" width="16" height="1" fill="#b8651a" opacity="0.12"/><rect x="240" y="18" width="8" height="1" fill="#f0be7c" opacity="0.14"/><rect x="288" y="18" width="16" height="1" fill="#b8651a" opacity="0.2"/><rect x="344" y="18" width="8" height="1" fill="#b8651a" opacity="0.28"/><rect x="352" y="18" width="8" height="1" fill="#f0be7c" opacity="0.14"/><rect x="384" y="18" width="16" height="1" fill="#f0be7c" opacity="0.3"/><rect x="400" y="18" width="16" height="1" fill="#b8651a" opacity="0.28"/><rect x="440" y="18" width="24" height="1" fill="#f0be7c" opacity="0.14"/><rect x="464" y="18" width="8" height="1" fill="#b8651a" opacity="0.28"/><rect x="472" y="18" width="16" height="1" fill="#f0be7c" opacity="0.2"/><rect x="488" y="18" width="16" height="1" fill="#f0be7c" opacity="0.2"/><rect x="560" y="18" width="24" height="1" fill="#b8651a" opacity="0.2"/><rect x="600" y="18" width="16" height="1" fill="#b8651a" opacity="0.2"/><rect x="624" y="18" width="16" height="1" fill="#b8651a" opacity="0.2"/><rect x="648" y="18" width="8" height="1" fill="#b8651a" opacity="0.2"/><rect x="656" y="18" width="16" height="1" fill="#f0be7c" opacity="0.2"/><rect x="696" y="18" width="8" height="1" fill="#f0be7c" opacity="0.2"/><rect x="704" y="18" width="8" height="1" fill="#f0be7c" opacity="0.2"/><rect x="16" y="19" width="16" height="1" fill="#b8651a" opacity="0.2"/><rect x="56" y="19" width="16" height="1" fill="#f0be7c" opacity="0.2"/><rect x="104" y="19" width="16" height="1" fill="#f0be7c" opacity="0.14"/><rect x="152" y="19" width="16" height="1" fill="#b8651a" opacity="0.28"/><rect x="192" y="19" width="8" height="1" fill="#b8651a" opacity="0.2"/><rect x="208" y="19" width="16" height="1" fill="#f0be7c" opacity="0.3"/><rect x="264" y="19" width="16" height="1" fill="#b8651a" opacity="0.28"/><rect x="288" y="19" width="8" height="1" fill="#b8651a" opacity="0.12"/><rect x="320" y="19" width="8" height="1" fill="#b8651a" opacity="0.28"/><rect x="352" y="19" width="24" height="1" fill="#b8651a" opacity="0.12"/><rect x="384" y="19" width="16" height="1" fill="#f0be7c" opacity="0.2"/><rect x="416" y="19" width="16" height="1" fill="#f0be7c" opacity="0.14"/><rect x="432" y="19" width="8" height="1" fill="#f0be7c" opacity="0.3"/><rect x="440" y="19" width="16" height="1" fill="#b8651a" opacity="0.28"/><rect x="496" y="19" width="8" height="1" fill="#f0be7c" opacity="0.3"/><rect x="504" y="19" width="8" height="1" fill="#f0be7c" opacity="0.14"/><rect x="536" y="19" width="16" height="1" fill="#b8651a" opacity="0.12"/><rect x="552" y="19" width="24" height="1" fill="#f0be7c" opacity="0.3"/><rect x="576" y="19" width="8" height="1" fill="#f0be7c" opacity="0.14"/><rect x="584" y="19" width="8" height="1" fill="#b8651a" opacity="0.12"/><rect x="600" y="19" width="16" height="1" fill="#f0be7c" opacity="0.14"/><rect x="632" y="19" width="8" height="1" fill="#f0be7c" opacity="0.2"/><rect x="656" y="19" width="8" height="1" fill="#b8651a" opacity="0.28"/><rect x="664" y="19" width="8" height="1" fill="#b8651a" opacity="0.12"/><rect x="680" y="19" width="8" height="1" fill="#b8651a" opacity="0.2"/><rect x="688" y="19" width="8" height="1" fill="#b8651a" opacity="0.2"/><rect x="712" y="19" width="8" height="1" fill="#b8651a" opacity="0.2"/><rect x="744" y="19" width="8" height="1" fill="#b8651a" opacity="0.2"/><rect x="24" y="20" width="8" height="1" fill="#f0be7c" opacity="0.14"/><rect x="32" y="20" width="8" height="1" fill="#b8651a" opacity="0.12"/><rect x="40" y="20" width="8" height="1" fill="#b8651a" opacity="0.2"/><rect x="48" y="20" width="8" height="1" fill="#b8651a" opacity="0.2"/><rect x="56" y="20" width="8" height="1" fill="#b8651a" opacity="0.12"/><rect x="64" y="20" width="8" height="1" fill="#b8651a" opacity="0.2"/><rect x="72" y="20" width="16" height="1" fill="#b8651a" opacity="0.12"/><rect x="88" y="20" width="16" height="1" fill="#b8651a" opacity="0.12"/><rect x="104" y="20" width="16" height="1" fill="#f0be7c" opacity="0.3"/><rect x="120" y="20" width="8" height="1" fill="#b8651a" opacity="0.12"/><rect x="136" y="20" width="8" height="1" fill="#f0be7c" opacity="0.3"/><rect x="168" y="20" width="8" height="1" fill="#f0be7c" opacity="0.2"/><rect x="200" y="20" width="16" height="1" fill="#f0be7c" opacity="0.2"/><rect x="216" y="20" width="16" height="1" fill="#f0be7c" opacity="0.2"/><rect x="232" y="20" width="24" height="1" fill="#f0be7c" opacity="0.3"/><rect x="304" y="20" width="8" height="1" fill="#f0be7c" opacity="0.14"/><rect x="376" y="20" width="16" height="1" fill="#f0be7c" opacity="0.3"/><rect x="392" y="20" width="16" height="1" fill="#f0be7c" opacity="0.14"/><rect x="424" y="20" width="24" height="1" fill="#f0be7c" opacity="0.14"/><rect x="448" y="20" width="8" height="1" fill="#f0be7c" opacity="0.14"/><rect x="472" y="20" width="8" height="1" fill="#f0be7c" opacity="0.3"/><rect x="480" y="20" width="8" height="1" fill="#f0be7c" opacity="0.2"/><rect x="496" y="20" width="16" height="1" fill="#b8651a" opacity="0.2"/><rect x="560" y="20" width="8" height="1" fill="#f0be7c" opacity="0.3"/><rect x="592" y="20" width="16" height="1" fill="#f0be7c" opacity="0.3"/><rect x="632" y="20" width="16" height="1" fill="#b8651a" opacity="0.28"/><rect x="648" y="20" width="8" height="1" fill="#f0be7c" opacity="0.14"/><rect x="664" y="20" width="24" height="1" fill="#f0be7c" opacity="0.3"/><rect x="688" y="20" width="8" height="1" fill="#b8651a" opacity="0.28"/><rect x="696" y="20" width="8" height="1" fill="#b8651a" opacity="0.2"/><rect x="704" y="20" width="8" height="1" fill="#b8651a" opacity="0.12"/><rect x="712" y="20" width="16" height="1" fill="#b8651a" opacity="0.28"/></svg><div id="ttext">emacs@localhost.localdomain</div>
<svg class="abs" style="left:0;top:0" width="752" height="21" viewBox="1 1 752 21">
<defs><linearGradient id="gem" x1="0" y1="0" x2="0" y2="1"><stop offset="0" stop-color="#6a62d4"/><stop offset="1" stop-color="#7d3cb6"/></linearGradient></defs><rect x="10" y="10" width="3" height="3" fill="#fff"/>
<g shape-rendering="crispEdges"><rect x="30" y="7" width="1" height="1" fill="#3a1e8e"/><rect x="31" y="7" width="1" height="1" fill="#7060d1"/><rect x="32" y="7" width="1" height="1" fill="#725dd0"/><rect x="33" y="7" width="1" height="1" fill="#735acf"/><rect x="34" y="7" width="1" height="1" fill="#7557ce"/><rect x="35" y="7" width="1" height="1" fill="#3c1b8d"/><rect x="29" y="8" width="1" height="1" fill="#3a1e8e"/><rect x="30" y="8" width="1" height="1" fill="#7060d1"/><rect x="31" y="8" width="1" height="1" fill="#725dd0"/><rect x="32" y="8" width="1" height="1" fill="#735acf"/><rect x="33" y="8" width="1" height="1" fill="#ffffff"/><rect x="34" y="8" width="1" height="1" fill="#ffffff"/><rect x="35" y="8" width="1" height="1" fill="#7952cc"/><rect x="36" y="8" width="1" height="1" fill="#3d1a8d"/><rect x="28" y="9" width="1" height="1" fill="#3a1e8e"/><rect x="29" y="9" width="1" height="1" fill="#7060d1"/><rect x="30" y="9" width="1" height="1" fill="#725dd0"/><rect x="31" y="9" width="1" height="1" fill="#ffffff"/><rect x="32" y="9" width="1" height="1" fill="#ffffff"/><rect x="33" y="9" width="1" height="1" fill="#ffffff"/><rect x="34" y="9" width="1" height="1" fill="#bca8e6"/><rect x="35" y="9" width="1" height="1" fill="#7b4fcb"/><rect x="36" y="9" width="1" height="1" fill="#7d4cca"/><rect x="37" y="9" width="1" height="1" fill="#3e188c"/><rect x="28" y="10" width="1" height="1" fill="#7060d1"/><rect x="29" y="10" width="1" height="1" fill="#725dd0"/><rect x="30" y="10" width="1" height="1" fill="#735acf"/><rect x="31" y="10" width="1" height="1" fill="#ffffff"/><rect x="32" y="10" width="1" height="1" fill="#bbaae6"/><rect x="33" y="10" width="1" height="1" fill="#7952cc"/><rect x="34" y="10" width="1" height="1" fill="#7b4fcb"/><rect x="35" y="10" width="1" height="1" fill="#7d4cca"/><rect x="36" y="10" width="1" height="1" fill="#7f49c9"/><rect x="37" y="10" width="1" height="1" fill="#8147c8"/><rect x="28" y="11" width="1" height="1" fill="#725dd0"/><rect x="29" y="11" width="1" height="1" fill="#735acf"/><rect x="30" y="11" width="1" height="1" fill="#7557ce"/><rect x="31" y="11" width="1" height="1" fill="#bbaae6"/><rect x="32" y="11" width="1" height="1" fill="#ffffff"/><rect x="33" y="11" width="1" height="1" fill="#bda7e5"/><rect x="34" y="11" width="1" height="1" fill="#7d4cca"/><rect x="35" y="11" width="1" height="1" fill="#7f49c9"/><rect x="36" y="11" width="1" height="1" fill="#8147c8"/><rect x="37" y="11" width="1" height="1" fill="#8344c7"/><rect x="28" y="12" width="1" height="1" fill="#735acf"/><rect x="29" y="12" width="1" height="1" fill="#7557ce"/><rect x="30" y="12" width="1" height="1" fill="#ffffff"/><rect x="31" y="12" width="1" height="1" fill="#bca8e6"/><rect x="32" y="12" width="1" height="1" fill="#7b4fcb"/><rect x="33" y="12" width="1" height="1" fill="#7d4cca"/><rect x="34" y="12" width="1" height="1" fill="#7f49c9"/><rect x="35" y="12" width="1" height="1" fill="#8147c8"/><rect x="36" y="12" width="1" height="1" fill="#8344c7"/><rect x="37" y="12" width="1" height="1" fill="#8441c6"/><rect x="28" y="13" width="1" height="1" fill="#7557ce"/><rect x="29" y="13" width="1" height="1" fill="#7755cd"/><rect x="30" y="13" width="1" height="1" fill="#ffffff"/><rect x="31" y="13" width="1" height="1" fill="#bda7e5"/><rect x="32" y="13" width="1" height="1" fill="#7d4cca"/><rect x="33" y="13" width="1" height="1" fill="#7f49c9"/><rect x="34" y="13" width="1" height="1" fill="#8147c8"/><rect x="35" y="13" width="1" height="1" fill="#8344c7"/><rect x="36" y="13" width="1" height="1" fill="#8441c6"/><rect x="37" y="13" width="1" height="1" fill="#863ec5"/><rect x="28" y="14" width="1" height="1" fill="#3c1b8d"/><rect x="29" y="14" width="1" height="1" fill="#7952cc"/><rect x="30" y="14" width="1" height="1" fill="#bda7e5"/><rect x="31" y="14" width="1" height="1" fill="#ffffff"/><rect x="32" y="14" width="1" height="1" fill="#ffffff"/><rect x="33" y="14" width="1" height="1" fill="#ffffff"/><rect x="34" y="14" width="1" height="1" fill="#ffffff"/><rect x="35" y="14" width="1" height="1" fill="#c2a0e2"/><rect x="36" y="14" width="1" height="1" fill="#863ec5"/><rect x="37" y="14" width="1" height="1" fill="#40158b"/><rect x="29" y="15" width="1" height="1" fill="#3d1a8d"/><rect x="30" y="15" width="1" height="1" fill="#7d4cca"/><rect x="31" y="15" width="1" height="1" fill="#7f49c9"/><rect x="32" y="15" width="1" height="1" fill="#c0a3e4"/><rect x="33" y="15" width="1" height="1" fill="#c1a2e3"/><rect x="34" y="15" width="1" height="1" fill="#c2a0e2"/><rect x="35" y="15" width="1" height="1" fill="#863ec5"/><rect x="36" y="15" width="1" height="1" fill="#40158b"/><rect x="30" y="16" width="1" height="1" fill="#3e188c"/><rect x="31" y="16" width="1" height="1" fill="#8147c8"/><rect x="32" y="16" width="1" height="1" fill="#8344c7"/><rect x="33" y="16" width="1" height="1" fill="#8441c6"/><rect x="34" y="16" width="1" height="1" fill="#863ec5"/><rect x="35" y="16" width="1" height="1" fill="#40158b"/></g>
<g shape-rendering="crispEdges" fill="none" stroke="#fff" stroke-width="1">
<rect x="704.5" y="13.5" width="8" height="2"/>
<rect x="721.5" y="8.5" width="8" height="7"/><rect x="721" y="7" width="9" height="2" fill="#fff" stroke="none"/>
</g>
<path d="M738.5 7.5 L746.5 15.5 M746.5 7.5 L738.5 15.5" stroke="#fff" stroke-width="1.1" fill="none"/>
</svg>
</div>
<div id="menubar">
<span style="left:8px">File</span><span style="left:46px">Edit</span><span style="left:87px">Options</span><span style="left:153px">Buffers</span><span style="left:215px">Tools</span><span style="left:264px">Diff</span><span style="left:303px">Help</span>
</div>
<div id="toolbar">
<div class="sep" style="left:257px"></div><div class="sep" style="left:348px"></div><div class="sep" style="left:491px"></div>
<span class="tlabel" style="left:209px;top:13px">Save</span>
<span class="tlabel" style="left:298px;top:13px">Undo</span>
<svg class="abs" style="left:0;top:0" width="752" height="42" viewBox="1 47 752 42">
<defs>
<linearGradient id="gdoc" x1="0" y1="0" x2="0" y2="1"><stop offset="0" stop-color="#f4f4f2"/><stop offset="0.5" stop-color="#fff"/><stop offset="1" stop-color="#fff"/></linearGradient>
<linearGradient id="gcab" x1="0" y1="0" x2="0" y2="1"><stop offset="0" stop-color="#f6f6f4"/><stop offset="1" stop-color="#aeb0aa"/></linearGradient>
<linearGradient id="gfold" x1="0" y1="0" x2="0" y2="1"><stop offset="0" stop-color="#f0e0c4"/><stop offset="1" stop-color="#e4ccA4"/></linearGradient>
<radialGradient id="gglass" cx="0.55" cy="0.3" r="0.6"><stop offset="0" stop-color="#ffffff"/><stop offset="0.35" stop-color="#eceeef"/><stop offset="1" stop-color="#cfd3d7"/></radialGradient>
<linearGradient id="gring" x1="0" y1="0" x2="1" y2="1"><stop offset="0" stop-color="#3f5fc0"/><stop offset="0.5" stop-color="#3350b0"/><stop offset="1" stop-color="#5a62c8"/></linearGradient>
<linearGradient id="gdr" x1="0" y1="0" x2="0" y2="1"><stop offset="0" stop-color="#d6d8d2"/><stop offset="0.5" stop-color="#f4f4f2"/><stop offset="1" stop-color="#c4c6c0"/></linearGradient>
</defs>
<!-- new file -->
<g>
<path d="M18.5 57.5 H30 L33.5 61 V78.5 H18.5 Z" fill="url(#gdoc)" stroke="#c3c5bd" stroke-width="1"/>
<path d="M18 79.3 H34" stroke="#cfd0cb" stroke-width="0.8"/>
<path d="M29.5 58 V61.5 H33" fill="#e8e8e6" stroke="#cfcfca" stroke-width="0.7"/>
<circle cx="33.5" cy="66.5" r="3.2" fill="#2459a8" stroke="#173f82" stroke-width="0.5"/>
<path d="M31.5 66.5 H35.5 M33.5 64.5 V68.5" stroke="#fff" stroke-width="1.2"/>
</g>
<!-- open folder -->
<g>
<path d="M60.5 72 V59.5 Q60.5 58.5 61.5 58.5 H67 Q68 58.5 68.3 59.3 L68.8 60.5 H76.5 Q77.5 60.5 77.5 61.5 V72 Z" fill="#cdb58a" stroke="#b89c6a" stroke-width="1"/>
<rect x="64.5" y="62.5" width="11" height="9" fill="#fff" stroke="#7c807c" stroke-width="1"/>
<path d="M66.2 65.5 H73.8 M66.2 67.5 H73.8" stroke="#b4b6ae" stroke-width="0.9"/>
<path d="M60 72.5 H65 L66.5 70.5 H78 Q78.5 70.5 78.5 71.5 V76.5 Q78.5 77.5 77.5 77.5 H60.5 Q59.5 77.5 59.5 76.5 V73.5 Q59.5 72.5 60 72.5 Z" fill="url(#gfold)" stroke="#c2a674" stroke-width="1"/>
<path d="M60 78.6 H78" stroke="#cfcfd2" stroke-width="1"/>
</g>
<!-- cabinet -->
<g>
<path d="M103.5 77.5 V60.8 L105.8 57.5 H118.2 L120.5 60.8 V77.5 Z" fill="url(#gcab)" stroke="#a6a8a2" stroke-width="1"/>
<path d="M104.6 60.6 L106.2 58.4 H117.8 L119.4 60.6 Z" fill="#fbfbfa"/>
<path d="M104.5 61 V76.5 H119.5 V61" fill="none" stroke="#f4f4f2" stroke-width="0.8"/>
<rect x="105.5" y="61.5" width="13" height="7" fill="url(#gdr)" stroke="#8e908c" stroke-width="0.9"/>
<rect x="105.5" y="69.5" width="13" height="7" fill="url(#gdr)" stroke="#8e908c" stroke-width="0.9"/>
<path d="M105 68.3 H119 M105 76.0 H119" stroke="#4c4e4a" stroke-width="1.1"/>
<path d="M105 61.5 H119 M105 69.5 H119" stroke="#b8bab4" stroke-width="0.8"/>
<path d="M108.4 63.2 H109.8 V64.4 H114.2 V63.2 H115.6 V65.6 Q115.6 66.4 114.8 66.4 H109.2 Q108.4 66.4 108.4 65.6 Z" fill="#fff" stroke="#8a8c86" stroke-width="0.7"/>
<path d="M108.4 71.200 H109.8 V72.400 H114.2 V71.200 H115.6 V73.600 Q115.6 74.400 114.8 74.400 H109.2 Q108.4 74.400 108.4 73.600 Z" fill="#fff" stroke="#8a8c86" stroke-width="0.7"/>
<path d="M104 78.4 H120" stroke="#d2d2d0" stroke-width="1"/>
</g>
<!-- X -->
<g>
<path d="M149.1 62.1 L160.9 73.9 M160.9 62.1 L149.1 73.9" stroke="#575955" stroke-width="4.4" stroke-linecap="round" fill="none"/>
<path d="M149.1 62.1 L160.9 73.9 M160.9 62.1 L149.1 73.9" stroke="#9c9e9a" stroke-width="2.9" stroke-linecap="round" fill="none"/>
<ellipse cx="156" cy="76.5" rx="8" ry="1.2" fill="#000" opacity="0.06"/>
</g>
<!-- save -->
<g>
<path d="M189.5 77.5 V59.800 L191 57.5 H205 L206.5 59.800 V77.5 Z" fill="#a9c1e5" stroke="#86a6d6" stroke-width="1"/>
<path d="M190.5 59.600 L191.500 58.400 H204.500 L205.500 59.600 Z" fill="#c9daf0"/>
<rect x="191.5" y="69.5" width="13" height="7" fill="#98b3dc" stroke="#86a4d2" stroke-width="0.8"/>
<path d="M194.200 72.300 H195.600 V73.600 H200.400 V72.300 H201.800 V75.200 H194.200 Z" fill="#fff"/>
<path d="M193 67.300 Q198 71.300 203 67.300 L198 71.300 Z" fill="#6d7f9c" opacity="0.6"/>
<path d="M196.600 59.200 H199.400 V65.600 C200.600 65.900 202 65.600 203.200 65 C202.600 67.400 200 68.600 198 70.200 C196 68.600 193.400 67.400 192.800 65 C194 65.600 195.400 65.900 196.600 65.600 Z" fill="#fff" stroke="#e4ebf5" stroke-width="0.5"/>
</g>
<!-- undo -->
<g>
<path d="M276.6 65.4 L283.2 59.5 Q284.9 58.9 285.1 60.6 V62.9 H292 C296 62.9 297.8 66 297.8 69 C297.8 73 294 75.600 289.5 75.400 C293 74.200 294.3 71.700 294 69.700 C293.7 67.900 292.5 67.500 291 67.500 H285.1 V70.200 Q284.9 71.900 283.2 71.300 Z" fill="#faf3b8" stroke="#dcc456" stroke-width="1" stroke-linejoin="round"/>
<path d="M279 65.400 H292 C294.500 65.400 296 67 296 69.500" fill="none" stroke="#fffbe0" stroke-width="1.2"/>
</g>
<!-- cut -->
<g opacity="0.95">
<path d="M372 57.5 C370.5 61 372 66 378 71 L379 69.5 Z" fill="#f2f2f0" stroke="#c2c2c0" stroke-width="0.8"/>
<path d="M384.5 57.5 C386 61 384.5 66 378.5 71 L377.5 69.5 Z" fill="#f2f2f0" stroke="#c2c2c0" stroke-width="0.8"/>
<circle cx="374" cy="74" r="2.7" fill="none" stroke="#e48c8c" stroke-width="2.4"/>
<circle cx="383" cy="74" r="2.7" fill="none" stroke="#e48c8c" stroke-width="2.4"/>
<circle cx="374" cy="74" r="1" fill="#f4f4f2"/><circle cx="383" cy="74" r="1" fill="#f4f4f2"/>
</g>
<!-- copy -->
<g>
<rect x="418.500" y="65.500" width="12" height="12" fill="#f4f4f2" stroke="#b6b6b4" stroke-width="1"/>
<path d="M421 68.500 H428 M421 70.500 H428 M421 72.500 H428 M421 74.500 H425" stroke="#c6c6c4" stroke-width="0.9"/>
<rect x="411.500" y="58.500" width="12" height="12" fill="#f4f4f2" stroke="#b6b6b4" stroke-width="1"/>
<path d="M414 61.500 H421 M414 63.500 H421 M414 65.500 H421 M414 67.500 H418" stroke="#c6c6c4" stroke-width="0.9"/>
</g>
<!-- paste -->
<g>
<rect x="455.500" y="59.500" width="16" height="17" rx="1.500" fill="#e9b96e" stroke="#c17d11" stroke-width="1"/>
<rect x="457" y="61" width="13" height="14" fill="#e4b060" opacity="0.6"/>
<path d="M458.500 62 Q458.500 60.500 460 60.500 V58.500 Q460 57.500 461 57.500 H466 Q467 57.500 467 58.500 V60.500 Q468.500 60.500 468.500 62 Z" fill="#eeeeec" stroke="#6a6c68" stroke-width="1"/>
<rect x="462.500" y="65.500" width="12" height="12" fill="#fff" stroke="#8a8c86" stroke-width="1"/>
<path d="M465 68.500 H472 M465 70.500 H472 M465 72.500 H472 M465 74.500 H469" stroke="#a8aaa4" stroke-width="0.9"/>
</g>
<!-- search -->
<g>
<ellipse cx="522" cy="77.500" rx="7" ry="1.500" fill="#000" opacity="0.08"/>
<path d="M524.800 71.800 L530.200 77.200" stroke="#2a2c2c" stroke-width="3" stroke-linecap="round"/>
<path d="M525.500 71.700 L530.300 76.500" stroke="#6a6c6a" stroke-width="0.800" stroke-linecap="round"/>
<circle cx="519" cy="66" r="9" fill="#1f3784"/>
<circle cx="519" cy="66" r="8.300" fill="url(#gring)"/>
<circle cx="519" cy="66" r="6.600" fill="#39497e"/>
<circle cx="519" cy="66" r="6.000" fill="url(#gglass)"/>
</g>

</svg>
</div>
<div class="abs" style="left:1px;top:23px;width:1px;height:66px;background:#f2f2f1"></div><div class="abs" style="left:752px;top:23px;width:1px;height:66px;background:#eeeeed"></div>
<div id="ed"></div>
<div class="fringe" style="left:1px"></div>
<div class="fringe" style="left:729px"></div>
<div class="sb" style="top:89px;height:288px"><div class="thumb" style="top:3px;height:69px"></div></div>
<div class="sb" style="top:395px;height:306px"><div class="thumb" style="top:3px;height:40px"></div></div>
<div class="row rh" style="top:89px"><span class="h">--- </span><span class="fh">old.py</span><span class="h">      2018-01-29 21:02:38.906134997 +0100</span></div>
<div class="row rh" style="top:107px"><span class="h">+++ </span><span class="fh">new.py</span><span class="h">      2018-02-01 22:41:40.064274389 +0100</span></div>
<div class="row" style="top:125px"><span class="hh">@@ -103,6 +103,10 @@</span></div>
<div class="row" style="top:143px"></div>
<div class="row" style="top:161px"><span class="c">     use_token = parse_token_clause(token)</span></div>
<div class="row" style="top:179px"></div>
<div class="row ra" style="top:197px"><span class="a">+    # three new lines</span></div>
<div class="row ra" style="top:215px"><span class="a">+    # three new lines</span></div>
<div class="row ra" style="top:233px"><span class="a">+    # three new lines</span></div>
<div class="row ra" style="top:251px"><span class="a">+</span></div>
<div class="row" style="top:269px"><span class="c">     url = component_analysis_url(context, ecosystem, component, version)</span></div>
<div class="row" style="top:287px"></div>
<div class="row" style="top:305px"><span class="c">     for _ in range(timeout // sleep_amount):</span></div>
<div class="row" style="top:323px"><span class="hh">@@ -115,22 +119,19 @@</span></div>
<div class="row" style="top:341px"><span class="c">         elif status_code != 404:</span></div>
<div class="row" style="top:359px"><span class="c">             raise Exception('Bad HTTP status code {c}'.format(c=status_code))</span></div>
<div class="cur"></div>
<div class="row" style="top:89px;left:9px;width:9px;color:#fff">-</div>
<div class="ml ml1" style="top:377px"> -:---  <b>old2new.patch</b>   Top L1     (Diff)</div>
<div class="row" style="top:395px"><span class="s">"""Tests for API endpoints that performs component search and component analysis</span></div>
<div class="row" style="top:413px"><span class="s">."""</span></div>
<div class="row" style="top:431px"><span class="k">import</span> requests</div>
<div class="row" style="top:449px"></div>
<div class="row" style="top:467px"><span class="k">from</span> behave <span class="k">import</span> given, then, when</div>
<div class="row" style="top:485px"><span class="k">from</span> urllib.parse <span class="k">import</span> urljoin</div>
<div class="row" style="top:503px"></div>
<div class="row" style="top:521px"><span class="k">from</span> src.parsing <span class="k">import</span> *</div>
<div class="row" style="top:539px"><span class="k">from</span> src.utils <span class="k">import</span> *</div>
<div class="row" style="top:557px"><span class="k">from</span> src.authorization_tokens <span class="k">import</span> *</div>
<div class="row" style="top:575px"></div>
<div class="row" style="top:593px"></div>
<div class="row" style="top:611px"><span class="t">@given</span>(<span class="s">'Component search service is running'</span>)</div>
<div class="row" style="top:629px"><span class="k">def</span> <span class="f">running_component_search_api</span>(context):</div>
<div class="row" style="top:647px">    <span class="s">"""Wait for the component search REST API to be available."""</span></div>
<div class="row" style="top:665px">    <span class="k">if</span> <span class="k">not</span> context.is_component_search_service_running(context):</div>
<div class="row" style="top:683px">        context.wait_for_component_search_service(context, 60)</div>
<div class="cur2"></div>
<svg class="abs" style="left:729px;top:400px" width="8" height="8" shape-rendering="crispEdges" fill="#000"><rect x="2" y="0" width="1" height="1"/><rect x="3" y="0" width="1" height="1"/><rect x="4" y="0" width="1" height="1"/><rect x="5" y="0" width="1" height="1"/><rect x="2" y="1" width="1" height="1"/><rect x="3" y="1" width="1" height="1"/><rect x="4" y="1" width="1" height="1"/><rect x="5" y="1" width="1" height="1"/><rect x="6" y="1" width="1" height="1"/><rect x="6" y="2" width="1" height="1"/><rect x="7" y="2" width="1" height="1"/><rect x="2" y="3" width="1" height="1"/><rect x="5" y="3" width="1" height="1"/><rect x="6" y="3" width="1" height="1"/><rect x="7" y="3" width="1" height="1"/><rect x="2" y="4" width="1" height="1"/><rect x="3" y="4" width="1" height="1"/><rect x="4" y="4" width="1" height="1"/><rect x="5" y="4" width="1" height="1"/><rect x="6" y="4" width="1" height="1"/><rect x="7" y="4" width="1" height="1"/><rect x="2" y="5" width="1" height="1"/><rect x="3" y="5" width="1" height="1"/><rect x="4" y="5" width="1" height="1"/><rect x="5" y="5" width="1" height="1"/><rect x="6" y="5" width="1" height="1"/><rect x="2" y="6" width="1" height="1"/><rect x="3" y="6" width="1" height="1"/><rect x="4" y="6" width="1" height="1"/><rect x="5" y="6" width="1" height="1"/><rect x="2" y="7" width="1" height="1"/><rect x="3" y="7" width="1" height="1"/><rect x="4" y="7" width="1" height="1"/><rect x="5" y="7" width="1" height="1"/><rect x="6" y="7" width="1" height="1"/></svg>
<svg class="abs" style="left:1px;top:418px" width="8" height="8" shape-rendering="crispEdges" fill="#000"><rect x="2" y="0" width="1" height="1"/><rect x="3" y="0" width="1" height="1"/><rect x="4" y="0" width="1" height="1"/><rect x="5" y="0" width="1" height="1"/><rect x="1" y="1" width="1" height="1"/><rect x="2" y="1" width="1" height="1"/><rect x="3" y="1" width="1" height="1"/><rect x="4" y="1" width="1" height="1"/><rect x="5" y="1" width="1" height="1"/><rect x="0" y="2" width="1" height="1"/><rect x="1" y="2" width="1" height="1"/><rect x="0" y="3" width="1" height="1"/><rect x="1" y="3" width="1" height="1"/><rect x="2" y="3" width="1" height="1"/><rect x="5" y="3" width="1" height="1"/><rect x="0" y="4" width="1" height="1"/><rect x="1" y="4" width="1" height="1"/><rect x="2" y="4" width="1" height="1"/><rect x="3" y="4" width="1" height="1"/><rect x="4" y="4" width="1" height="1"/><rect x="5" y="4" width="1" height="1"/><rect x="1" y="5" width="1" height="1"/><rect x="2" y="5" width="1" height="1"/><rect x="3" y="5" width="1" height="1"/><rect x="4" y="5" width="1" height="1"/><rect x="5" y="5" width="1" height="1"/><rect x="2" y="6" width="1" height="1"/><rect x="3" y="6" width="1" height="1"/><rect x="4" y="6" width="1" height="1"/><rect x="5" y="6" width="1" height="1"/><rect x="1" y="7" width="1" height="1"/><rect x="2" y="7" width="1" height="1"/><rect x="3" y="7" width="1" height="1"/><rect x="4" y="7" width="1" height="1"/><rect x="5" y="7" width="1" height="1"/></svg>
<div class="ml ml2" style="top:701px"> -:---  <b>old.py</b>         Top L1     (Python)</div>
<div class="row" style="top:719px">old.py has auto save data; consider M-x recover-this-file</div>
<div class="abs" style="left:22px;top:738px;width:710px;height:2px;background:#a9d67c"></div>
</div></body></html>
